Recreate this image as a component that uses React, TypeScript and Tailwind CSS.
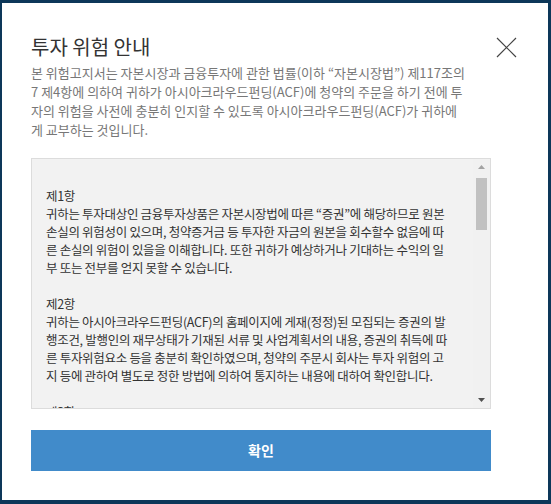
const intro = [
  '본 위험고지서는 자본시장과 금융투자에 관한 법률(이하 “자본시장법”) 제117조의',
  '7 제4항에 의하여 귀하가 아시아크라우드펀딩(ACF)에 청약의 주문을 하기 전에 투',
  '자의 위험을 사전에 충분히 인지할 수 있도록 아시아크라우드펀딩(ACF)가 귀하에',
  '게 교부하는 것입니다.',
]

const clauses = [
  {
    title: '제1항',
    lines: [
      '귀하는 투자대상인 금융투자상품은 자본시장법에 따른 “증권”에 해당하므로 원본',
      '손실의 위험성이 있으며, 청약증거금 등 투자한 자금의 원본을 회수할수 없음에 따',
      '른 손실의 위험이 있을을 이해합니다. 또한 귀하가 예상하거나 기대하는 수익의 일',
      '부 또는 전부를 얻지 못할 수 있습니다.',
    ],
  },
  {
    title: '제2항',
    lines: [
      '귀하는 아시아크라우드펀딩(ACF)의 홈페이지에 게재(정정)된 모집되는 증권의 발',
      '행조건, 발행인의 재무상태가 기재된 서류 및 사업계획서의 내용, 증권의 취득에 따',
      '른 투자위험요소 등을 충분히 확인하였으며, 청약의 주문시 회사는 투자 위험의 고',
      '지 등에 관하여 별도로 정한 방법에 의하여 통지하는 내용에 대하여 확인합니다.',
    ],
  },
  {
    title: '제3항',
    lines: [],
  },
]

export default function App() {
  return (
    <div
      className="w-[551px] h-[504px] bg-[#0d3759] pt-[3px] pl-[2px] pr-[3px] pb-[4px]"
      style={{ fontFamily: '"Noto Sans CJK KR", "Noto Sans", sans-serif' }}
    >
      <div className="h-full bg-white px-[29px] pt-[30px]">
        <div className="flex items-start justify-between">
          <h1 className="text-[20px] leading-[28px] text-[#333]">투자 위험 안내</h1>
          <button className="mt-[4px] mr-[2px] text-[#444]">
            <svg width="21" height="21" viewBox="0 0 21 21" fill="none" stroke="currentColor" strokeWidth="1.2">
              <path d="M1 1L20 20M20 1L1 20" />
            </svg>
          </button>
        </div>
        <div className="mt-[2px] text-[13px] leading-[19px] text-[#777]">
          {intro.map((l) => (
            <div key={l} className="whitespace-nowrap">{l}</div>
          ))}
        </div>

        <div className="mt-[19px] flex h-[251px] w-[460px] border border-[#dcdcdc] bg-[#f2f2f2]">
          <div className="flex-1 overflow-hidden pl-[14px] pt-[28px] text-[12.5px] leading-[18px] text-[#333] tracking-[-0.3px]">
            {clauses.map((c) => (
              <div key={c.title} className="mb-[18px]">
                <div>{c.title}</div>
                {c.lines.map((l) => (
                  <div key={l} className="whitespace-nowrap">{l}</div>
                ))}
              </div>
            ))}
          </div>
          <div className="flex w-[17px] flex-col items-center bg-[#f1f1f1]">
            <svg width="9" height="17" viewBox="0 0 9 17" className="text-[#a3a3a3]">
              <path d="M1 10L4.5 6L8 10Z" fill="currentColor" />
            </svg>
            <div className="mt-[2px] h-[52px] w-[11px] bg-[#c1c1c1]" />
            <div className="flex-1" />
            <svg width="9" height="17" viewBox="0 0 9 17" className="text-[#505050]">
              <path d="M1 7L8 7L4.5 11Z" fill="currentColor" />
            </svg>
          </div>
        </div>

        <button className="mt-[21px] h-[41px] w-[460px] bg-[#418bca] text-[14px] font-bold text-white">
          확인
        </button>
      </div>
    </div>
  )
}
